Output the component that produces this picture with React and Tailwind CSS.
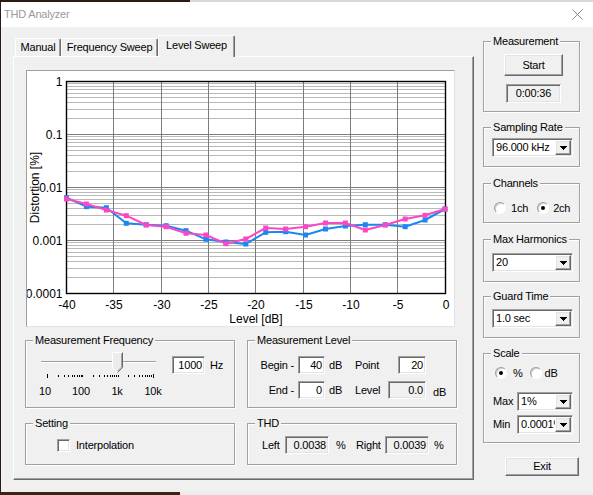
import React from "react";

const sunken =
  "border border-t-[#a0a0a0] border-l-[#a0a0a0] border-r-white border-b-white shadow-[inset_1px_1px_0_#696969,inset_-1px_-1px_0_#e3e3e3]";
const raised =
  "border border-t-white border-l-white border-r-[#696969] border-b-[#696969] shadow-[inset_-1px_-1px_0_#a0a0a0,inset_1px_1px_0_#e3e3e3]";

function Group({ title, className, children }) {
  return (
    <fieldset
      className={`border border-[#a0a0a0] shadow-[inset_1px_1px_0_#fff,1px_1px_0_#fff] min-w-0 ${className}`}
    >
      <legend className="ml-[7px] px-[2px] leading-[13px] bg-[#f0f0f0]">{title}</legend>
      {children}
    </fieldset>
  );
}

function Box({ className, ro, children, align = "justify-end" }) {
  return (
    <div
      className={`${sunken} ${ro ? "bg-[#f0f0f0]" : "bg-white"} flex items-center ${align} px-[2px] leading-none ${className}`}
    >
      {children}
    </div>
  );
}

function Combo({ className, value }) {
  return (
    <div className={`${sunken} bg-white flex items-stretch p-[1px] ${className}`}>
      <span className="flex-1 pl-[2px] overflow-hidden whitespace-nowrap leading-[15px]">{value}</span>
      <div className={`w-[16px] bg-[#f0f0f0] ${raised} flex items-center justify-center`}>
        <svg width="7" height="4" viewBox="0 0 7 4" shapeRendering="crispEdges" className="block">
          <path d="M0 0H7L3.5 4Z" fill="#000" />
        </svg>
      </div>
    </div>
  );
}

function Radio({ checked }) {
  return (
    <div className="w-[12px] h-[12px] rounded-full bg-white border border-t-[#a0a0a0] border-l-[#a0a0a0] border-r-white border-b-white shadow-[inset_1px_1px_0_#cfcfcf] flex items-center justify-center">
      {checked && <div className="w-[4px] h-[4px] rounded-full bg-black" />}
    </div>
  );
}

const blue = [197.7, 206.7, 207.7, 223.3, 224.7, 225.7, 230.7, 239.3, 242, 244, 232.3, 231.7, 235, 229, 226, 224.7, 224.7, 226.7, 220, 209];
const pink = [199, 204, 210, 215.7, 225, 226.7, 233.3, 235, 243.7, 239, 228, 229, 226.7, 223, 223, 230, 225, 219, 215.3, 209];

function Chart() {
  const vx = (i) => Math.round(66.5 + i * 47.3125 - 0.5) + 0.5;
  const L = 66.5, R = 445.5, T = 81.5, B = 293.5;
  const minors = [];
  for (let k = 0; k < 4; k++) {
    const base = 81 + 53 * (k + 1);
    for (let m = 2; m < 10; m++) minors.push(Math.round(base - 53 * Math.log10(m)) + 0.5);
  }
  const majors = [0, 1, 2, 3, 4].map((k) => 81.5 + 53 * k);
  const ylab = ["1", "0.1", "0.01", "0.001", "0.0001"];
  const xlab = ["-40", "-35", "-30", "-25", "-20", "-15", "-10", "-5", "0"];
  const px = (i) => 66.5 + i * (378.5 / 19);
  const pts = (arr) => arr.map((y, i) => `${px(i)},${y}`).join(" ");
  return (
    <div className="w-[429px] h-[257px] bg-white border border-t-[#a0a0a0] border-l-[#a0a0a0] border-r-[#e3e3e3] border-b-[#e3e3e3]">
      <svg
        width="427"
        height="255"
        viewBox="27 71 427 255"
        className="block tracking-normal"
        fontFamily="'Liberation Sans', Arial, sans-serif"
        fontSize="12"
      >
        {minors.map((y, i) => (
          <line key={"m" + i} x1={L} x2={R} y1={y} y2={y} stroke="#b9b9b9" strokeWidth="1" />
        ))}
        {majors.map((y, i) => (
          <line key={"M" + i} x1={L} x2={R} y1={y} y2={y} stroke="#7c7c7c" strokeWidth="1" />
        ))}
        {xlab.map((_, i) => (
          <line key={"v" + i} x1={vx(i)} x2={vx(i)} y1={T} y2={B} stroke="#7c7c7c" strokeWidth="1" />
        ))}
        <rect x={L} y={T} width={R - L} height={B - T} fill="none" stroke="#000" strokeWidth="1.4" />
        <polyline points={pts(blue)} fill="none" stroke="#1a88f0" strokeWidth="2" strokeLinejoin="round" />
        {blue.map((y, i) => (
          <rect key={"b" + i} x={px(i) - 2.5} y={y - 2.5} width="5" height="5" fill="#1a88f0" />
        ))}
        <polyline points={pts(pink)} fill="none" stroke="#fb46c6" strokeWidth="2" strokeLinejoin="round" />
        {pink.map((y, i) => (
          <rect key={"p" + i} x={px(i) - 2.5} y={y - 2.5} width="5" height="5" fill="#fb46c6" />
        ))}
        {ylab.map((t, i) => (
          <text key={"yl" + i} x="62.5" y={majors[i] + 4} textAnchor="end" fill="#000">
            {t}
          </text>
        ))}
        {xlab.map((t, i) => (
          <text key={"xl" + i} x={vx(i) + 0.5} y="308.5" textAnchor="middle" fill="#000">
            {t}
          </text>
        ))}
        <text x="256" y="322.5" textAnchor="middle" fill="#000">
          Level [dB]
        </text>
        <text transform="translate(38.6,187.5) rotate(-90)" textAnchor="middle" fill="#000">
          Distortion [%]
        </text>
      </svg>
    </div>
  );
}

function Slider() {
  const ticks = [];
  for (let d = 0; d < 3; d++) for (let m = 1; m < 10; m++) ticks.push(6 + 35.3 * (d + Math.log10(m)));
  ticks.push(6 + 35.3 * 3);
  return (
    <div className="flex flex-col ml-[1px] w-[145px]">
      <div className="relative ml-[14px] mt-[5px] w-[122px] h-[21px]">
        <div className="mt-[9px] w-[115px] h-[2px] border-t border-b border-t-[#a0a0a0] border-b-white" />
        <svg className="absolute left-[71px] top-0 block" width="11" height="21" viewBox="0 0 11 21">
          <polygon points="0,0 11,0 11,15.5 5.5,21 0,15.5" fill="#ececec" />
          <polyline points="0.5,15.5 0.5,0.5 10.5,0.5" fill="none" stroke="#fff" />
          <polyline points="0.5,15.5 5.5,20.5" fill="none" stroke="#fff" />
          <polyline points="10.5,0.5 10.5,15.5 5.5,20.5" fill="none" stroke="#696969" />
          <polyline points="9.5,1.5 9.5,15 5.5,19" fill="none" stroke="#a0a0a0" />
        </svg>
      </div>
      <svg className="ml-[14px] block" width="122" height="5" shapeRendering="crispEdges">
        {ticks.map((t, i) => {
          const end = i === 0 || i === ticks.length - 1;
          return <rect key={i} x={Math.round(t)} y={end ? 1 : 2} width="1" height={end ? 4 : 2} fill="#000" />;
        })}
      </svg>
      <div className="flex mt-[7px] h-[13px] leading-[13px]">
        {["10", "100", "1k", "10k"].map((t) => (
          <div key={t} className="w-[36px] text-center">
            {t}
          </div>
        ))}
      </div>
    </div>
  );
}

export default function App() {
  return (
    <div className="w-[593px] h-[495px] overflow-hidden bg-[#2a1b15] flex flex-col font-['Liberation_Sans',Arial,sans-serif] text-[11px] text-black tracking-[-0.2px]">
      <div className="h-[2px] flex shrink-0">
        <div className="w-[190px] bg-[#2a1b15]" />
        <div className="flex-1 bg-[#d9d9d9]" />
      </div>
      <div className="ml-[1px] w-[592px] h-[490px] shrink-0 bg-[#f0f0f0] flex flex-col">
        <div className="h-[25px] shrink-0 bg-white flex items-center justify-between pl-[3px] pr-[10px]">
          <span className="text-[11px] text-[#9a9a9a]">THD Analyzer</span>
          <svg width="11" height="11" viewBox="0 0 11 11" className="block">
            <path d="M0.5 0.5L10.5 10.5M10.5 0.5L0.5 10.5" stroke="#8a8a8a" strokeWidth="1" />
          </svg>
        </div>
        <div className="flex pt-[8px]">
          {/* Tab control */}
          <div className="ml-[12px] w-[461px] flex flex-col">
            <div className="h-[21px] flex items-end pl-[2px]">
              <div className="w-[46px] h-[18px] border-t border-l border-r border-t-white border-l-white border-r-[#696969] shadow-[inset_-1px_0_0_#a0a0a0] rounded-t-[2px] flex items-center justify-center">
                Manual
              </div>
              <div className="w-[97px] h-[18px] border-t border-l border-r border-t-white border-l-white border-r-[#696969] shadow-[inset_-1px_0_0_#a0a0a0] rounded-t-[2px] flex items-center justify-center">
                Frequency Sweep
              </div>
              <div className="relative z-10 -mb-[1px] w-[77px] h-[22px] bg-[#f0f0f0] border-t border-l border-r border-t-white border-l-white border-r-[#696969] shadow-[inset_-1px_0_0_#a0a0a0] rounded-t-[2px] flex items-center justify-center pb-[2px]">
                Level Sweep
              </div>
            </div>
            <div className="h-[424px] border border-t-white border-l-white border-r-[#696969] border-b-[#696969] shadow-[inset_-1px_-1px_0_#a0a0a0] pt-[13px] pl-[12px] flex flex-col">
              <Chart />
              <div className="flex gap-[12px] mt-[7px] -ml-[1px]">
                <div className="flex flex-col w-[210px]">
                  <Group title="Measurement Frequency" className="h-[74px] w-[210px]">
                    <div className="flex">
                      <Slider />
                      <div className="flex items-center mt-[9px] h-[18px] self-start">
                        <Box className="w-[33px] h-[18px]">1000</Box>
                        <span className="ml-[5px]">Hz</span>
                      </div>
                    </div>
                  </Group>
                  <Group title="Setting" className="mt-[9px] h-[48px] w-[210px]">
                    <div className="flex items-center ml-[31px] mt-[7px]">
                      <div className={`w-[13px] h-[13px] bg-white ${sunken}`} />
                      <span className="ml-[6px]">Interpolation</span>
                    </div>
                  </Group>
                </div>
                <div className="flex flex-col w-[210px]">
                  <Group title="Measurement Level" className="h-[74px] w-[210px]">
                    <div className="flex flex-col mt-[9px]">
                      <div className="flex items-center h-[18px]">
                        <span className="w-[46px] text-right">Begin -</span>
                        <Box className="ml-[4px] w-[27px] h-[18px]">40</Box>
                        <span className="ml-[4px] w-[26px]">dB</span>
                        <span className="w-[43px]">Point</span>
                        <Box className="w-[28px] h-[18px]">20</Box>
                      </div>
                      <div className="flex items-center h-[18px] mt-[7px]">
                        <span className="w-[46px] text-right">End -</span>
                        <Box className="ml-[4px] w-[27px] h-[18px]">0</Box>
                        <span className="ml-[4px] w-[26px]">dB</span>
                        <span className="w-[33px]">Level</span>
                        <Box ro className="w-[38px] h-[18px]">0.0</Box>
                        <span className="ml-[7px] mt-[4px]">dB</span>
                      </div>
                    </div>
                  </Group>
                  <Group title="THD" className="mt-[9px] h-[48px] w-[210px]">
                    <div className="flex items-center mt-[6px] h-[18px]">
                      <span className="ml-[14px] w-[23px]">Left</span>
                      <Box ro className="w-[44px] h-[18px]">0.0038</Box>
                      <span className="pl-[7px] w-[27px]">%</span>
                      <span className="w-[29px]">Right</span>
                      <Box ro className="w-[44px] h-[18px]">0.0039</Box>
                      <span className="ml-[5px]">%</span>
                    </div>
                  </Group>
                </div>
              </div>
            </div>
          </div>
          {/* Right column */}
          <div className="ml-[9px] w-[97px] flex flex-col">
            <Group title="Measurement" className="h-[77px]">
              <div className={`mt-[6px] ml-[20px] w-[59px] h-[22px] ${raised} flex items-center justify-center`}>
                Start
              </div>
              <Box ro align="justify-center" className="mt-[8px] ml-[22px] w-[55px] h-[19px]">
                0:00:36
              </Box>
            </Group>
            <Group title="Sampling Rate" className="mt-[9px] h-[46px]">
              <Combo className="mt-[4px] ml-[8px] w-[81px] h-[19px]" value="96.000 kHz" />
            </Group>
            <Group title="Channels" className="mt-[10px] h-[46px]">
              <div className="flex items-center mt-[12px] ml-[10px] h-[12px]">
                <Radio />
                <span className="ml-[5px]">1ch</span>
                <div className="ml-[9px]">
                  <Radio checked />
                </div>
                <span className="ml-[4px]">2ch</span>
              </div>
            </Group>
            <Group title="Max Harmonics" className="mt-[10px] h-[49px]">
              <Combo className="mt-[7px] ml-[8px] w-[81px] h-[19px]" value="20" />
            </Group>
            <Group title="Guard Time" className="mt-[8px] h-[48px]">
              <Combo className="mt-[6px] ml-[8px] w-[81px] h-[19px]" value="1.0 sec" />
            </Group>
            <Group title="Scale" className="mt-[9px] h-[96px]">
              <div className="flex items-center mt-[7px] ml-[11px] h-[12px]">
                <Radio checked />
                <span className="ml-[6px]">%</span>
                <div className="ml-[7px]">
                  <Radio />
                </div>
                <span className="ml-[3px]">dB</span>
              </div>
              <div className="flex items-center mt-[13px] ml-[9px]">
                <span className="w-[24px]">Max</span>
                <Combo className="w-[56px] h-[19px]" value="1%" />
              </div>
              <div className="flex items-center mt-[4px] ml-[9px]">
                <span className="w-[24px]">Min</span>
                <Combo className="w-[56px] h-[19px]" value="0.0001%" />
              </div>
            </Group>
            <div className={`mt-[14px] ml-[22px] w-[74px] h-[19px] ${raised} flex items-center justify-center`}>
              Exit
            </div>
          </div>
        </div>
      </div>
      <div className="flex h-[3px] shrink-0">
        <div className="w-[180px] bg-[#3d2316]" />
        <div className="flex-1 bg-[#ececec]" />
      </div>
    </div>
  );
}
